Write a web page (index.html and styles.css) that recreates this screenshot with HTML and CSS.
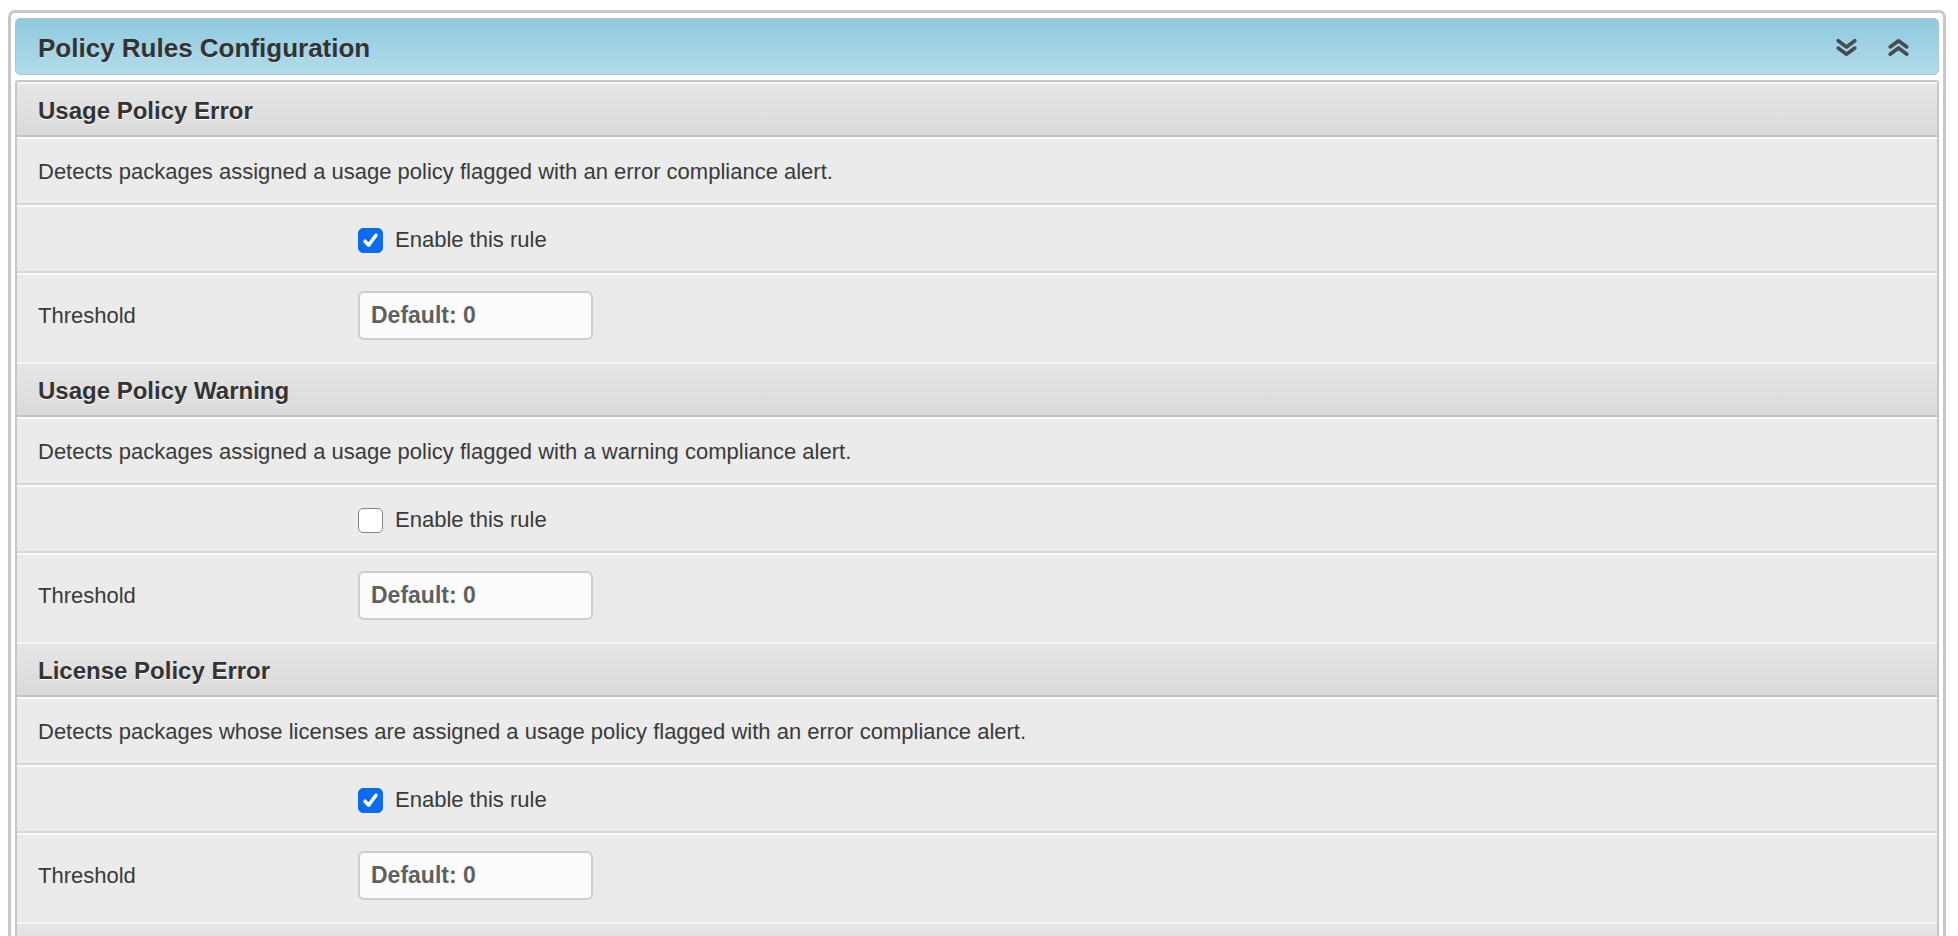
FILE: index.html
```html
<!DOCTYPE html>
<html lang="en">
<head>
    <meta charset="UTF-8">
    <title>Policy Rules Configuration</title>
    <link rel="stylesheet" href="styles.css">
</head>
<body>
<div class="panel">
    <div class="panel-head">
        <h2>Policy Rules Configuration</h2>
        <div class="tools">
            <a class="tool" title="Expand all">
                <svg width="22" height="18" viewBox="0 0 22 18"><polyline points="3,2.5 11,8.5 19,2.5"/><polyline points="3,9.5 11,15.5 19,9.5"/></svg>
            </a>
            <a class="tool" title="Collapse all">
                <svg width="22" height="18" viewBox="0 0 22 18"><polyline points="3,8.5 11,2.5 19,8.5"/><polyline points="3,15.5 11,9.5 19,15.5"/></svg>
            </a>
        </div>
    </div>

    <div class="panel-body">
        <!-- usage policy error -->
        <div class="rule">
            <h3 class="rule-title">Usage Policy Error</h3>
            <div class="row"><p>Detects packages assigned a usage policy flagged with an error compliance alert.</p></div>
            <div class="row field">
                <span></span>
                <label class="check"><input type="checkbox" checked> Enable this rule</label>
            </div>
            <div class="row field last">
                <span>Threshold</span>
                <input type="text" class="num" placeholder="Default: 0">
            </div>
        </div>

        <!-- usage policy warning -->
        <div class="rule">
            <h3 class="rule-title">Usage Policy Warning</h3>
            <div class="row"><p>Detects packages assigned a usage policy flagged with a warning compliance alert.</p></div>
            <div class="row field">
                <span></span>
                <label class="check"><input type="checkbox"> Enable this rule</label>
            </div>
            <div class="row field last">
                <span>Threshold</span>
                <input type="text" class="num" placeholder="Default: 0">
            </div>
        </div>

        <!-- license policy error -->
        <div class="rule">
            <h3 class="rule-title">License Policy Error</h3>
            <div class="row"><p>Detects packages whose licenses are assigned a usage policy flagged with an error compliance alert.</p></div>
            <div class="row field">
                <span></span>
                <label class="check"><input type="checkbox" checked> Enable this rule</label>
            </div>
            <div class="row field last">
                <span>Threshold</span>
                <input type="text" class="num" placeholder="Default: 0">
            </div>
        </div>

        <!-- license policy warning, starts below the fold -->
        <div class="rule">
            <h3 class="rule-title">License Policy Warning</h3>
        </div>
    </div>
</div>
</body>
</html>
```

FILE: styles.css
```css
html{
    overflow: hidden;
}
body{
    margin: 10px 12px 0 8px;
    font-family: "Liberation Sans", Arial, Helvetica, sans-serif;
    color: #333;
    background: #fff;
}
.panel{
    border: 3px solid #c8c8c8;
    border-bottom: 0;
    border-radius: 7px 7px 0 0;
    padding: 5px 4px 0 4px;
}
.panel-head{
    display: flex;
    align-items: center;
    justify-content: space-between;
    height: 55px;
    padding: 0 28px 0 22px;
    border: 1px solid #a9c6d2;
    border-radius: 5px;
    background: linear-gradient(#8ec9de, #b3dcea);
}
.panel-head h2{
    margin: 0;
    padding-top: 4px;
    font-size: 26px;
    font-weight: bold;
    color: #333;
    text-shadow: 0 1px 0 rgba(255,255,255,.35);
}
.tools{
    display: flex;
    gap: 29px;
    padding-top: 2px;
}
.tool{
    display: block;
    width: 23px;
    height: 19px;
    cursor: pointer;
}
.tool svg{
    display: block;
    width: 23px;
    height: 19px;
    fill: none;
    stroke: #474c50;
    stroke-width: 3.4;
    stroke-linecap: round;
    stroke-linejoin: round;
}
.panel-body{
    margin-top: 5px;
    border: 2px solid #c6c6c6;
    border-bottom: 0;
    border-radius: 3px 3px 0 0;
    background: #ebebeb;
}
.rule-title{
    margin: 0;
    padding: 14px 21px 11px;
    font-size: 24px;
    line-height: 26px;
    font-weight: bold;
    color: #333;
    text-shadow: 0 1px 0 #fff;
    border-top: 2px solid #f6f6f6;
    border-bottom: 2px solid #c2c2c2;
    background: linear-gradient(#e6e6e6, #dadada);
}
.row{
    padding: 21px 21px 19px;
    border-top: 2px solid #fafafa;
    border-bottom: 2px solid #d6d6d6;
    font-size: 22px;
    line-height: 24px;
    color: #3a3a3a;
}
.row p{
    margin: 0;
}
.field{
    display: grid;
    grid-template-columns: 320px 1fr;
    align-items: center;
}
.field.last{
    padding: 16px 21px 22px;
    border-bottom: 0;
}
.check{
    display: flex;
    align-items: center;
    gap: 12px;
    height: 24px;
}
.check input{
    appearance: none;
    -webkit-appearance: none;
    width: 25px;
    height: 25px;
    margin: 0;
    border: 1.5px solid #858585;
    border-radius: 5px;
    background: #fff;
}
.check input:checked{
    border-color: #0b6cf0;
    background: #0b6cf0 url("data:image/svg+xml,%3Csvg xmlns='http://www.w3.org/2000/svg' viewBox='0 0 16 16'%3E%3Cpath d='M3.4 8.6l3 3.3L12.6 3.6' fill='none' stroke='white' stroke-width='3' stroke-linecap='round' stroke-linejoin='round'/%3E%3C/svg%3E") center / 19px no-repeat;
}
.num{
    box-sizing: border-box;
    width: 235px;
    height: 49px;
    padding: 0 11px;
    border: 2px solid #cdcdcd;
    border-radius: 6px;
    background: #fbfbfb;
    font-family: inherit;
    font-size: 23px;
    font-weight: bold;
    color: #555;
    outline: none;
}
.num::placeholder{
    color: #606060;
}
```
